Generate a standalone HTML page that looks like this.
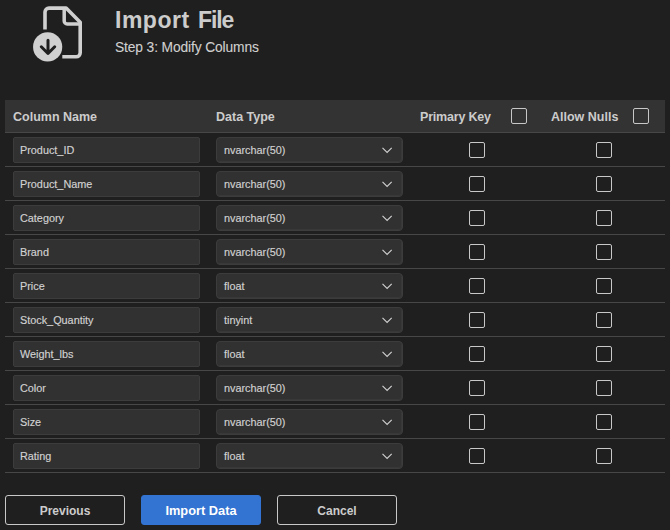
<!DOCTYPE html>
<html><head><meta charset="utf-8"><style>
html,body{margin:0;padding:0;}
body{width:670px;height:530px;background:#1f1f1f;position:relative;overflow:hidden;font-family:"Liberation Sans",sans-serif;color:#cccccc;}
.icon{position:absolute;left:0;top:0;}
.title{position:absolute;left:115px;top:5px;font-size:23px;font-weight:bold;color:#cccccc;white-space:nowrap;line-height:30px;}
.sub{position:absolute;left:115px;top:39px;font-size:13.8px;letter-spacing:-0.12px;color:#d0d0d0;-webkit-text-stroke:0.1px #d0d0d0;white-space:nowrap;line-height:18px;}
.hdr{position:absolute;left:5px;top:100px;width:660px;height:32px;background:#333333;border-bottom:1px solid #474747;}
.ht{position:absolute;top:9px;font-size:12.5px;font-weight:bold;line-height:17px;white-space:nowrap;color:#cccccc;}
.cb{position:absolute;width:14px;height:14px;border:1px solid #c8c8c8;border-radius:2px;box-sizing:content-box;}
.row{position:absolute;left:5px;width:660px;height:33px;border-bottom:1px solid #474747;}
.row .cb{top:9px;margin-left:-5px;}
.inp,.sel{position:absolute;top:4px;height:24px;border:1px solid #3c3c3c;background:#313131;border-radius:2px;font-size:10.85px;line-height:24px;white-space:nowrap;color:#d2d2d2;-webkit-text-stroke:0.15px #d2d2d2;box-sizing:content-box;}
.inp{left:8px;width:185px;padding:0;text-indent:6px;}
.sel{left:211px;width:185px;text-indent:7px;border-radius:4px;box-shadow:inset -1px -1px 0 #383838;}
.chev{position:absolute;left:164px;top:9px;}
.btn{position:absolute;top:495px;width:120px;height:30px;box-sizing:border-box;border-radius:3px;font-size:12px;font-weight:bold;text-align:center;line-height:30px;}
.b1{left:5px;border:1px solid #c8c8c8;color:#cccccc;}
.b2{left:141px;background:#3373d1;border:1px solid #3373d1;color:#ffffff;}
.b3{left:277px;border:1px solid #c8c8c8;color:#cccccc;}
</style></head><body>
<svg class="icon" width="100" height="70" viewBox="0 0 100 70">
  <path d="M45 29.5 V12.1 A4 4 0 0 1 49 8.1 H66.1 L80.2 22.2 V52.8 A4 4 0 0 1 76.2 56.8 H62.3" fill="none" stroke="#d0d0d0" stroke-width="3.6" stroke-linejoin="round"/>
  <path d="M64.2 8.5 V21 A3 3 0 0 0 67.2 24 H80" fill="none" stroke="#d0d0d0" stroke-width="3.5" stroke-linejoin="round"/>
  <circle cx="47.65" cy="46.9" r="14.6" fill="#d0d0d0"/>
  <path d="M48 40.3 V53.3 M41.3 46.8 L48 53.5 L54.7 46.8" fill="none" stroke="#1f1f1f" stroke-width="3" stroke-linecap="round" stroke-linejoin="round"/>
</svg>
<div class="title"><span style="position:absolute;left:0;letter-spacing:0.5px">Import</span><span style="position:absolute;left:83px;letter-spacing:-1.1px">File</span></div>
<div class="sub">Step 3: Modify Columns</div>
<div class="hdr">
  <div class="ht" style="left:8px">Column Name</div>
  <div class="ht" style="left:211px">Data Type</div>
  <div class="ht" style="left:415px;letter-spacing:-0.2px">Primary Key</div>
  <div class="cb" style="left:506px;top:8px"></div>
  <div class="ht" style="left:546px">Allow Nulls</div>
  <div class="cb" style="left:628px;top:8px"></div>
</div>
<div class="row" style="top:133px">
  <div class="inp">Product_ID</div>
  <div class="sel">nvarchar(50)<svg class="chev" width="13" height="8" viewBox="0 0 13 8"><path d="M1.5 0.9 L6.1 5.4 L10.7 0.9" fill="none" stroke="#d0d0d0" stroke-width="1.15"/></svg></div>
  <div class="cb" style="left:469px"></div>
  <div class="cb" style="left:596px"></div>
</div><div class="row" style="top:167px">
  <div class="inp">Product_Name</div>
  <div class="sel">nvarchar(50)<svg class="chev" width="13" height="8" viewBox="0 0 13 8"><path d="M1.5 0.9 L6.1 5.4 L10.7 0.9" fill="none" stroke="#d0d0d0" stroke-width="1.15"/></svg></div>
  <div class="cb" style="left:469px"></div>
  <div class="cb" style="left:596px"></div>
</div><div class="row" style="top:201px">
  <div class="inp">Category</div>
  <div class="sel">nvarchar(50)<svg class="chev" width="13" height="8" viewBox="0 0 13 8"><path d="M1.5 0.9 L6.1 5.4 L10.7 0.9" fill="none" stroke="#d0d0d0" stroke-width="1.15"/></svg></div>
  <div class="cb" style="left:469px"></div>
  <div class="cb" style="left:596px"></div>
</div><div class="row" style="top:235px">
  <div class="inp">Brand</div>
  <div class="sel">nvarchar(50)<svg class="chev" width="13" height="8" viewBox="0 0 13 8"><path d="M1.5 0.9 L6.1 5.4 L10.7 0.9" fill="none" stroke="#d0d0d0" stroke-width="1.15"/></svg></div>
  <div class="cb" style="left:469px"></div>
  <div class="cb" style="left:596px"></div>
</div><div class="row" style="top:269px">
  <div class="inp">Price</div>
  <div class="sel">float<svg class="chev" width="13" height="8" viewBox="0 0 13 8"><path d="M1.5 0.9 L6.1 5.4 L10.7 0.9" fill="none" stroke="#d0d0d0" stroke-width="1.15"/></svg></div>
  <div class="cb" style="left:469px"></div>
  <div class="cb" style="left:596px"></div>
</div><div class="row" style="top:303px">
  <div class="inp">Stock_Quantity</div>
  <div class="sel">tinyint<svg class="chev" width="13" height="8" viewBox="0 0 13 8"><path d="M1.5 0.9 L6.1 5.4 L10.7 0.9" fill="none" stroke="#d0d0d0" stroke-width="1.15"/></svg></div>
  <div class="cb" style="left:469px"></div>
  <div class="cb" style="left:596px"></div>
</div><div class="row" style="top:337px">
  <div class="inp">Weight_lbs</div>
  <div class="sel">float<svg class="chev" width="13" height="8" viewBox="0 0 13 8"><path d="M1.5 0.9 L6.1 5.4 L10.7 0.9" fill="none" stroke="#d0d0d0" stroke-width="1.15"/></svg></div>
  <div class="cb" style="left:469px"></div>
  <div class="cb" style="left:596px"></div>
</div><div class="row" style="top:371px">
  <div class="inp">Color</div>
  <div class="sel">nvarchar(50)<svg class="chev" width="13" height="8" viewBox="0 0 13 8"><path d="M1.5 0.9 L6.1 5.4 L10.7 0.9" fill="none" stroke="#d0d0d0" stroke-width="1.15"/></svg></div>
  <div class="cb" style="left:469px"></div>
  <div class="cb" style="left:596px"></div>
</div><div class="row" style="top:405px">
  <div class="inp">Size</div>
  <div class="sel">nvarchar(50)<svg class="chev" width="13" height="8" viewBox="0 0 13 8"><path d="M1.5 0.9 L6.1 5.4 L10.7 0.9" fill="none" stroke="#d0d0d0" stroke-width="1.15"/></svg></div>
  <div class="cb" style="left:469px"></div>
  <div class="cb" style="left:596px"></div>
</div><div class="row" style="top:439px">
  <div class="inp">Rating</div>
  <div class="sel">float<svg class="chev" width="13" height="8" viewBox="0 0 13 8"><path d="M1.5 0.9 L6.1 5.4 L10.7 0.9" fill="none" stroke="#d0d0d0" stroke-width="1.15"/></svg></div>
  <div class="cb" style="left:469px"></div>
  <div class="cb" style="left:596px"></div>
</div>
<div class="btn b1">Previous</div>
<div class="btn b2" style="font-size:12.8px">Import Data</div>
<div class="btn b3">Cancel</div>
</body></html>
